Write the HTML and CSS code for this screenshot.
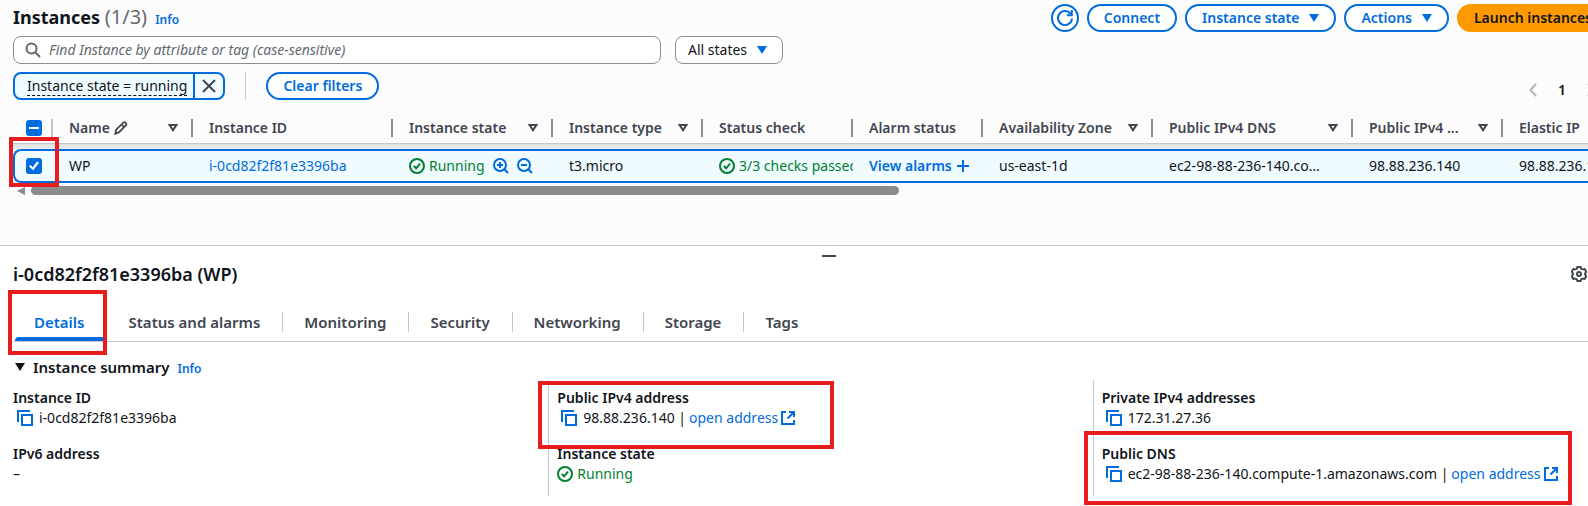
FILE: index.html
```html
<!DOCTYPE html>
<html lang="en">
<head>
<meta charset="utf-8">
<meta name="viewport" content="width=device-width, initial-scale=1">
<title>Instances</title>
<link rel="stylesheet" href="styles.css">
</head>
<body>
<svg class="sprite" aria-hidden="true">
  <symbol id="i-down" viewBox="0 0 10 8"><path d="M0 0h10L5 8z" fill="currentColor"/></symbol>
  <symbol id="i-sort" viewBox="0 0 10 8"><path d="M1.6 1h6.8L5 6.2z" fill="none" stroke="currentColor" stroke-width="2"/></symbol>
  <symbol id="i-ok" viewBox="0 0 16 16"><g fill="none" stroke="currentColor" stroke-width="2"><circle cx="8" cy="8" r="7"/><path d="M4.8 8l2.4 2.3L11 5.6"/></g></symbol>
  <symbol id="i-copy" viewBox="0 0 16 16"><g fill="none" stroke="currentColor" stroke-width="2"><path d="M1 12V1h12"/><path d="M5 5h10v10H5z"/></g></symbol>
  <symbol id="i-ext" viewBox="0 0 16 16"><g fill="none" stroke="currentColor" stroke-width="2"><path d="M6 2H2v12h12v-4"/><path d="M9 2h5v5M14 2L7.5 8.5"/></g></symbol>
  <symbol id="i-zin" viewBox="0 0 16 16"><g fill="none" stroke="currentColor" stroke-width="2"><circle cx="7" cy="7" r="6"/><path d="M11.5 11.5L15 15M4 7h6M7 4v6"/></g></symbol>
  <symbol id="i-zout" viewBox="0 0 16 16"><g fill="none" stroke="currentColor" stroke-width="2"><circle cx="7" cy="7" r="6"/><path d="M11.5 11.5L15 15M4 7h6"/></g></symbol>
</svg>
<div class="page">
  <main class="list">
    <header class="bar">
      <h1 class="title">Instances <span class="count">(1/3)</span></h1>
      <a class="info" href="#">Info</a>
      <div class="actions">
        <button class="btn btn-round" aria-label="Refresh"><svg width="18" height="18" viewBox="0 0 18 18"><g fill="none" stroke="currentColor" stroke-width="2"><path d="M16 9.5A7 7 0 1 1 14.6 4.8"/><path d="M15.8 1v5.2h-5"/></g></svg></button>
        <button class="btn">Connect</button>
        <button class="btn">Instance state <svg class="caret"><use href="#i-down"/></svg></button>
        <button class="btn">Actions <svg class="caret"><use href="#i-down"/></svg></button>
        <button class="btn btn-primary">Launch instances</button>
      </div>
    </header>
    <div class="filters">
      <label class="search">
        <svg width="16" height="16" viewBox="0 0 16 16"><g fill="none" stroke="currentColor" stroke-width="2"><circle cx="6.5" cy="6.5" r="5"/><path d="M10.2 10.2L15 15"/></g></svg>
        <input type="text" aria-label="Find Instance" placeholder="Find Instance by attribute or tag (case-sensitive)">
      </label>
      <div class="states">
        <select aria-label="State filter"><option>All states</option></select>
        <svg class="caret"><use href="#i-down"/></svg>
      </div>
    </div>
    <div class="tokens">
      <div class="token">
        <button class="token-text"><span>Instance state = running</span></button>
        <button class="token-x" aria-label="Remove filter"><svg width="14" height="14" viewBox="0 0 14 14"><path d="M1 1l12 12M13 1L1 13" stroke="currentColor" stroke-width="2"/></svg></button>
      </div>
      <span class="rule"></span>
      <button class="btn clear">Clear filters</button>
      <nav class="pages" aria-label="Pages">
        <button aria-label="Previous page"><svg width="8" height="14" viewBox="0 0 8 14"><path d="M7 1L1.5 7 7 13" fill="none" stroke="currentColor" stroke-width="2"/></svg></button>
        <button class="current">1</button>
        <button aria-label="Next page"><svg width="8" height="14" viewBox="0 0 8 14"><path d="M1 1l5.500 6L1 13" fill="none" stroke="currentColor" stroke-width="2"/></svg></button>
      </nav>
    </div>
    <table class="grid">
      <colgroup><col class="w40"><col class="w140"><col class="w200"><col class="w160"><col class="w150"><col class="w150"><col class="w130"><col class="w170"><col class="w200"><col class="w150"><col class="w150"></colgroup>
      <thead>
        <tr>
          <th class="pick"><div class="th light"><input type="checkbox" class="box mixed" checked aria-label="Select all"></div></th>
          <th><div class="th"><span>Name</span><svg class="pen" viewBox="0 0 16 16"><g fill="none" stroke="currentColor" stroke-width="2"><path d="M1.500 14.500l1-4.500 8-8c1-1 2.200-.6 2.900.1s1.100 1.900.1 2.900l-8 8z"/><path d="M8.500 4l3 3"/></g></svg><svg class="sort"><use href="#i-sort"/></svg></div></th>
          <th><div class="th"><span>Instance ID</span></div></th>
          <th><div class="th"><span>Instance state</span><svg class="sort"><use href="#i-sort"/></svg></div></th>
          <th><div class="th"><span>Instance type</span><svg class="sort"><use href="#i-sort"/></svg></div></th>
          <th><div class="th"><span>Status check</span></div></th>
          <th><div class="th"><span>Alarm status</span></div></th>
          <th><div class="th"><span>Availability Zone</span><svg class="sort"><use href="#i-sort"/></svg></div></th>
          <th><div class="th"><span>Public IPv4 DNS</span><svg class="sort"><use href="#i-sort"/></svg></div></th>
          <th><div class="th"><span>Public IPv4 ...</span><svg class="sort"><use href="#i-sort"/></svg></div></th>
          <th><div class="th"><span>Elastic IP</span></div></th>
        </tr>
      </thead>
      <tbody>
        <tr>
          <td class="pick"><input type="checkbox" class="box" checked aria-label="Select WP"><span class="mark mark-row"></span></td>
          <td>WP</td>
          <td><a href="#">i-0cd82f2f81e3396ba</a></td>
          <td><div class="cell"><span class="ok"><svg class="ic"><use href="#i-ok"/></svg>Running</span><button class="zoom" aria-label="Include"><svg class="ic"><use href="#i-zin"/></svg></button><button class="zoom" aria-label="Exclude"><svg class="ic"><use href="#i-zout"/></svg></button></div></td>
          <td>t3.micro</td>
          <td class="flush"><div class="cell"><span class="ok"><svg class="ic"><use href="#i-ok"/></svg>3/3 checks passed</span></div></td>
          <td class="flush"><a class="strong" href="#">View alarms <svg class="plus" viewBox="0 0 12 12"><path d="M6 0v12M0 6h12" stroke="currentColor" stroke-width="2"/></svg></a></td>
          <td>us-east-1d</td>
          <td>ec2-98-88-236-140.co…</td>
          <td>98.88.236.140</td>
          <td>98.88.236.140</td>
        </tr>
      </tbody>
    </table>
    <div class="scroll"><svg width="8" height="8" viewBox="0 0 8 8"><path d="M8 0v8L0 4z" fill="currentColor"/></svg><span class="thumb"></span></div>
  </main>
  <section class="panel">
    <button class="handle" aria-label="Resize panel"></button>
    <div class="panel-head">
      <h2>i-0cd82f2f81e3396ba (WP)</h2>
      <button class="gear" aria-label="Preferences"><svg width="16" height="16" viewBox="0 0 16 16"><g fill="none" stroke="currentColor" stroke-width="2" stroke-linejoin="round"><path d="M6.300 1h3.400l.6 1.900 2 .5 1.500-.3 1.400 2.600L13.900 8l1.300 2.300-1.400 2.600-1.500-.3-2 .5-.6 1.900H6.300l-.6-1.900-2-.5-1.500.3L.8 10.300 2.100 8 .8 5.700l1.400-2.600 1.500.3 2-.5z"/><circle cx="8" cy="8" r="2"/></g></svg></button>
    </div>
    <nav class="tabs" role="tablist">
      <button class="tab active" role="tab" aria-selected="true">Details<span class="mark mark-tab"></span></button>
      <button class="tab" role="tab">Status and alarms</button>
      <button class="tab" role="tab">Monitoring</button>
      <button class="tab" role="tab">Security</button>
      <button class="tab" role="tab">Networking</button>
      <button class="tab" role="tab">Storage</button>
      <button class="tab" role="tab">Tags</button>
    </nav>
    <div class="summary">
      <svg class="caret"><use href="#i-down"/></svg>
      <h3>Instance summary</h3>
      <a class="info" href="#">Info</a>
    </div>
    <div class="facts">
      <dl>
        <div class="fact"><dt>Instance ID</dt><dd><svg class="ic copy"><use href="#i-copy"/></svg>i-0cd82f2f81e3396ba</dd></div>
        <div class="fact"><dt>IPv6 address</dt><dd>–</dd></div>
      </dl>
      <dl>
        <div class="fact"><dt>Public IPv4 address</dt><dd><svg class="ic copy"><use href="#i-copy"/></svg>98.88.236.140 | <a href="#">open address <svg class="ic"><use href="#i-ext"/></svg></a></dd><span class="mark mark-ip"></span></div>
        <div class="fact"><dt>Instance state</dt><dd><span class="ok"><svg class="ic"><use href="#i-ok"/></svg>Running</span></dd></div>
      </dl>
      <dl>
        <div class="fact"><dt>Private IPv4 addresses</dt><dd><svg class="ic copy"><use href="#i-copy"/></svg>172.31.27.36</dd></div>
        <div class="fact"><dt>Public DNS</dt><dd><svg class="ic copy"><use href="#i-copy"/></svg>ec2-98-88-236-140.compute-1.amazonaws.com | <a href="#">open address <svg class="ic"><use href="#i-ext"/></svg></a></dd><span class="mark mark-dns"></span></div>
      </dl>
    </div>
  </section>
</div>
</body>
</html>
```
FILE: styles.css
```css
:root {
  --blue: #006ce0;
  --text: #0f141a;
  --muted: #424650;
  --line: #c6c6cd;
  --edge: #8c8c94;
  --green: #00802f;
  --mark: #e81c1c;
}
* { box-sizing: border-box; }
body {
  margin: 0;
  background: #fcfcfd;
  color: var(--text);
  font: 14px/20px "Noto Sans", "Open Sans", sans-serif;
}
button, input, select { font: inherit; color: inherit; margin: 0; }
button { background: none; border: 0; padding: 0; }
h1, h2, h3, dl, dd { margin: 0; }
a { color: var(--blue); text-decoration: none; }
svg { flex: none; }
.sprite { display: none; }
.page { overflow: hidden; min-height: 100vh; display: flex; flex-direction: column; }
.list { padding: 4px 0 50px 13px; }

.bar { display: flex; align-items: center; height: 28px; margin-right: -21px; }
.title { font-size: 18px; line-height: 24px; font-weight: 700; padding-bottom: 2px; }
.count { font-size: 20px; font-weight: 400; color: #656871; }
.info { font-size: 12px; font-weight: 600; margin: 4px 0 0 8px; }
.actions { display: flex; gap: 8px; margin-left: auto; }
.btn {
  display: inline-flex; align-items: center; gap: 10px; height: 28px; padding: 0 15px;
  border: 2px solid var(--blue); border-radius: 14px; background: #fff;
  color: var(--blue); font-weight: 600; white-space: nowrap;
}
.btn-round { width: 28px; padding: 0; justify-content: center; }
.btn-primary { background: #ff9900; border-color: #ff9900; color: var(--text); }
.caret { width: 10px; height: 8px; }

.filters { display: flex; gap: 14px; margin-top: 4px; }
.search {
  display: flex; align-items: center; gap: 8px; flex: 0 1 648px; height: 28px; padding: 0 12px 0 11px;
  border: 1px solid var(--edge); border-radius: 8px; background: #fff; color: #656871;
}
.search input { flex: 1; min-width: 0; border: 0; outline: 0; padding: 0; background: none; }
.search input::placeholder { color: #656871; font-style: italic; opacity: 1; }
.states { position: relative; width: 108px; height: 28px; }
.states select {
  appearance: none; width: 100%; height: 100%; padding: 0 12px;
  border: 1px solid var(--edge); border-radius: 8px; background: #fff;
}
.states .caret { position: absolute; right: 16px; top: 10px; color: var(--blue); pointer-events: none; }

.tokens { display: flex; align-items: center; margin-top: 8px; height: 28px; }
.token { display: flex; height: 28px; border: 2px solid var(--blue); border-radius: 8px; background: #f0fbff; }
.token-text { padding: 0 6px 0 12px; }
.token-text span { border-bottom: 1px dashed var(--text); display: block; line-height: 18px; }
.token-x { width: 30px; border-left: 2px solid var(--blue); color: var(--muted); display: grid; place-items: center; }
.rule { width: 1px; height: 28px; background: var(--line); margin: 0 20px; }
.pages { display: flex; gap: 20px; align-items: center; margin: 8px -7px 0 auto; color: #b4b4bb; }
.pages button { display: flex; }
.pages .current { width: 10px; justify-content: center; color: var(--text); font-weight: 600; }

.grid { table-layout: fixed; width: 1640px; border-spacing: 0; margin-top: 12px; }
.w40 { width: 40px; } .w130 { width: 130px; } .w140 { width: 140px; } .w150 { width: 150px; }
.w160 { width: 160px; } .w170 { width: 170px; } .w200 { width: 200px; }
th { padding: 0 0 5px; text-align: left; font-weight: 600; color: var(--muted); background: linear-gradient(#dfe0e2, #efeff0) bottom / 100% 5px no-repeat; }
.th {
  display: flex; align-items: center; height: 32px; padding: 0 15px 0 16px;
  border-bottom: 1px solid var(--line); background: linear-gradient(var(--edge), var(--edge)) right 7px / 2px 18px no-repeat #fcfcfd;
  white-space: nowrap;
}
.th.light { background: linear-gradient(var(--line), var(--line)) right 7px / 2px 18px no-repeat #fcfcfd; }
.pick .th { padding: 0 0 0 13px; }
.sort { width: 10px; height: 8px; margin-left: auto; }
.pen { width: 14px; height: 14px; margin-left: 4px; }
td {
  height: 34px; padding: 0 16px; background: #f0fbff; white-space: nowrap; overflow: hidden;
  border-top: 2px solid var(--blue); border-bottom: 2px solid var(--blue);
}
td.flush { padding-right: 0; }
td.pick { position: relative; overflow: visible; padding: 0 0 0 11px; border-left: 2px solid var(--blue); border-radius: 8px 0 0 8px; }
.box { appearance: none; display: block; position: relative; width: 16px; height: 16px; border-radius: 3px; background: var(--blue); }
.box::after { content: ""; position: absolute; inset: 3px; background: #fff; clip-path: polygon(0 55%, 16% 40%, 38% 62%, 80% 5%, 100% 18%, 42% 92%); }
.box.mixed::after { inset: 7px 3px; clip-path: none; }
.cell { display: flex; align-items: center; }
.ic { width: 16px; height: 16px; }
.ok { display: inline-flex; align-items: center; gap: 4px; color: var(--green); }
.zoom { display: flex; margin-left: 8px; color: var(--blue); }
.strong { display: inline-flex; align-items: center; gap: 5px; font-weight: 600; }
.plus { width: 12px; height: 12px; }
.scroll { display: flex; align-items: center; gap: 6px; margin-top: 3px; padding-left: 4px; color: #8b8b8b; }
.thumb { width: 868px; height: 9px; border-radius: 5px; background: #8b8b8b; }

.panel { flex: 1; background: #fff; border-top: 1px solid var(--line); padding-left: 13px; }
.handle { display: block; width: 14px; height: 2px; margin: 9px auto 0; background: var(--muted); position: relative; left: 28px; }
.panel-head { display: flex; align-items: center; justify-content: space-between; height: 24px; margin-top: 5px; }
.panel-head h2 { font-size: 18px; font-weight: 600; }
.gear { display: flex; margin-right: 1px; color: var(--muted); }
.tabs { display: flex; align-items: center; height: 38px; margin-top: 18px; padding-bottom: 2px; border-bottom: 1px solid var(--line); }
.tab { position: relative; padding: 0 22px 0 21px; font-size: 15px; font-weight: 600; color: var(--muted); border-right: 1px solid var(--line); }
.tab:last-child { border: 0; }
.tab.active { color: var(--blue); border-color: transparent; }
.tab.active::after { content: ""; position: absolute; left: 2px; right: 0; top: 25px; height: 4px; background: var(--blue); border-radius: 4px 0 0 0; }
.summary { display: flex; align-items: center; height: 24px; padding-left: 2px; margin: 13px 0 1px; }
.summary h3 { font-size: 15px; font-weight: 600; margin-left: 8px; }
.summary .info { margin-top: 3px; }
.facts { display: grid; grid-template-columns: repeat(3, 1fr); margin-right: -58px; }
.facts dl { display: grid; gap: 16px; padding: 8px 0 12px 8px; border-left: 1px solid var(--line); margin-left: -9px; }
.facts dl:first-child { border-color: transparent; }
.fact { position: relative; }
dt { font-weight: 600; }
dd, dd a { display: flex; align-items: center; white-space: nowrap; }
dd a { margin-left: 3px; }
dd a .ic { margin-left: 2px; }
.copy { margin: 0 6px 0 4px; color: var(--blue); }

.mark { position: absolute; z-index: 2; border: 4px solid var(--mark); pointer-events: none; }
.mark-row { left: -6px; top: -14px; width: 50px; height: 50px; }
.mark-tab { left: -5px; top: -22px; width: 99px; height: 65px; }
.mark-ip { left: -19px; top: -7px; width: 296px; height: 68px; }
.mark-dns { left: -18px; top: -13px; width: 488px; height: 74px; }
```
